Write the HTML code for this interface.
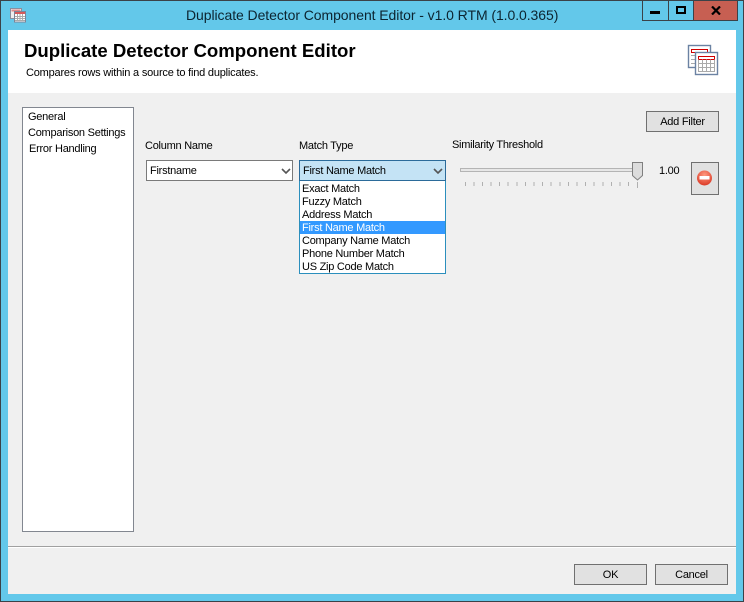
<!DOCTYPE html>
<html><head><meta charset="utf-8"><style>
html,body{margin:0;padding:0;width:744px;height:602px;overflow:hidden;background:#63c8ea}
*{box-sizing:border-box}
body{position:relative;font:11px/13px "Liberation Sans",sans-serif;letter-spacing:-.25px;color:#000}
.a{position:absolute;white-space:nowrap}
.btn{position:absolute;background:#e1e1e1;border:1px solid #707070;text-align:center}
</style></head><body>
<div class="a" style="left:0;top:0;width:744px;height:602px;border:1px solid #3b4248"></div>
<div class="a" style="left:186px;top:7px;font-size:14px;line-height:16px;color:#0c2430;letter-spacing:-.07px">Duplicate Detector Component Editor - v1.0 RTM (1.0.0.365)</div>
<svg class="a" style="left:10px;top:7px" width="17" height="16" viewBox="0 0 17 16"><rect x=".5" y="1.5" width="11" height="10" fill="#eee" stroke="#8a8f9e"/><rect x="1.500" y="2.500" width="9" height="2" fill="#e08a8a"/><rect x="4.5" y="4.5" width="11" height="10.5" fill="#fff" stroke="#7c8498"/><rect x="5" y="5" width="10" height="2" fill="#d65a5a"/><path d="M5 9.5h10M5 11.5h10M5 13.500h10M7.5 7v7M10 7v7M12.5 7v7" stroke="#aaa" stroke-width="1"/></svg>
<div class="a" style="left:642px;top:0;width:96px;height:21px;border:1px solid #3b4248;background:#63c8ea"></div>
<div class="a" style="left:668px;top:0;width:1px;height:21px;background:#3b4248"></div>
<div class="a" style="left:693px;top:0;width:45px;height:21px;background:#c75f52;border:1px solid #3b4248"></div>
<div class="a" style="left:650px;top:11px;width:10px;height:3px;background:#000"></div>
<div class="a" style="left:676px;top:6px;width:10px;height:8px;border:2px solid #000"></div>
<svg class="a" style="left:711px;top:6px" width="10" height="9" viewBox="0 0 10 9"><path d="M1 .5L9 8.5M9 .5L1 8.5" stroke="#000" stroke-width="2.2"/></svg>
<div class="a" style="left:8px;top:30px;width:728px;height:564px;background:#f0f0f0"></div>
<div class="a" style="left:8px;top:30px;width:728px;height:63px;background:#fff"></div>
<div class="a" style="left:24px;top:41px;font-size:18.6px;line-height:20px;font-weight:bold;letter-spacing:0">Duplicate Detector Component Editor</div>
<div class="a" style="left:26px;top:67px;letter-spacing:-.2px">Compares rows within a source to find duplicates.</div>
<svg class="a" style="left:687px;top:44px" width="32" height="32" viewBox="0 0 32 32">
<rect x="1.5" y="1.5" width="22" height="22" fill="#fff" stroke="#6b82a3" stroke-width="1.4"/><rect x="4.5" y="5.500" width="16" height="3" fill="none" stroke="#d10000"/><path d="M4 11.5h5M4 15.5h5M4 19.5h5M8.5 8v14" stroke="#aaa"/>
<rect x="8.5" y="8.5" width="22" height="22" fill="#fff" stroke="#6b82a3" stroke-width="1.4"/><rect x="11.5" y="12.5" width="16" height="3" fill="none" stroke="#d10000"/><path d="M11.5 15.5v12h16v-12M11.5 19.5h16M11.5 23.5h16M15.500 15.5v12M19.500 15.5v12M23.500 15.5v12" fill="none" stroke="#aaa"/></svg>
<div class="a" style="left:22px;top:107px;width:112px;height:425px;background:#fff;border:1px solid #828790"></div>
<div class="a" style="left:28px;top:111px">General</div>
<div class="a" style="left:28px;top:127px">Comparison Settings</div>
<div class="a" style="left:29px;top:143px">Error Handling</div>
<div class="btn" style="left:646px;top:111px;width:73px;height:21px;line-height:20px">Add Filter</div>
<div class="a" style="left:145px;top:140px">Column Name</div>
<div class="a" style="left:299px;top:140px">Match Type</div>
<div class="a" style="left:452px;top:139px;letter-spacing:-.28px">Similarity Threshold</div>
<div class="a" style="left:146px;top:160px;width:147px;height:21px;background:#fff;border:1px solid #7a7a7a;padding:4px 0 0 3px">Firstname</div>
<svg class="a" style="left:281px;top:168px" width="10" height="7"><path d="M1 1l4 4 4-4" fill="none" stroke="#555" stroke-width="1.6"/></svg>
<div class="a" style="left:299px;top:160px;width:147px;height:21px;background:#c4e3f5;border:1px solid #2b6b9a;padding:4px 0 0 3px">First Name Match</div>
<svg class="a" style="left:433px;top:168px" width="10" height="7"><path d="M1 1l4 4 4-4" fill="none" stroke="#555" stroke-width="1.6"/></svg>
<div class="a" style="left:299px;top:181px;width:147px;height:93px;background:#fff;border:1px solid #2b8fbd;border-top:0"></div>
<div class="a" style="left:300px;top:221px;width:145px;height:13px;background:#3399ff"></div>
<div class="a" style="left:302px;top:183px">Exact Match</div>
<div class="a" style="left:302px;top:196px">Fuzzy Match</div>
<div class="a" style="left:302px;top:209px">Address Match</div>
<div class="a" style="left:302px;top:222px;color:#fff">First Name Match</div>
<div class="a" style="left:302px;top:235px">Company Name Match</div>
<div class="a" style="left:302px;top:248px">Phone Number Match</div>
<div class="a" style="left:302px;top:261px">US Zip Code Match</div>
<div class="a" style="left:460px;top:168px;width:180px;height:4px;background:#e7e7e7;border:1px solid #b4b4b4"></div>
<svg class="a" style="left:632px;top:162px" width="12" height="19"><path d="M.5.5h10v13l-5 4.500-5-4.500z" fill="#dcdcdc" stroke="#7f7f7f"/></svg>
<svg class="a" style="left:465px;top:182px" width="174" height="6"><path d="M.5 0v4M9 0v4M17.500 0v4M26 0v4M34.500 0v4M43 0v4M52 0v4M60.500 0v4M69 0v4M77.500 0v4M86 0v4M95 0v4M103.500 0v4M112 0v4M120.500 0v4M129 0v4M138 0v4M146.500 0v4M155 0v4M163.500 0v4M172.500 0v6" stroke="#b0b0b0"/></svg>
<div class="a" style="left:659px;top:165px">1.00</div>
<div class="btn" style="left:691px;top:162px;width:28px;height:33px"></div>
<svg class="a" style="left:696px;top:170px" width="17" height="16"><defs><radialGradient id="g" cx=".5" cy=".3" r=".8"><stop offset="0" stop-color="#ff9a80"/><stop offset="1" stop-color="#d62c1a"/></radialGradient></defs><circle cx="8.500" cy="8" r="7.500" fill="url(#g)"/><rect x="3.500" y="6" width="10" height="3.500" fill="#fff"/></svg>
<div class="a" style="left:8px;top:546px;width:728px;height:1px;background:#a0a0a0"></div>
<div class="a" style="left:8px;top:547px;width:728px;height:1px;background:#fff"></div>
<div class="btn" style="left:574px;top:564px;width:73px;height:21px;line-height:20px">OK</div>
<div class="btn" style="left:655px;top:564px;width:73px;height:21px;line-height:20px">Cancel</div>
</body></html>
